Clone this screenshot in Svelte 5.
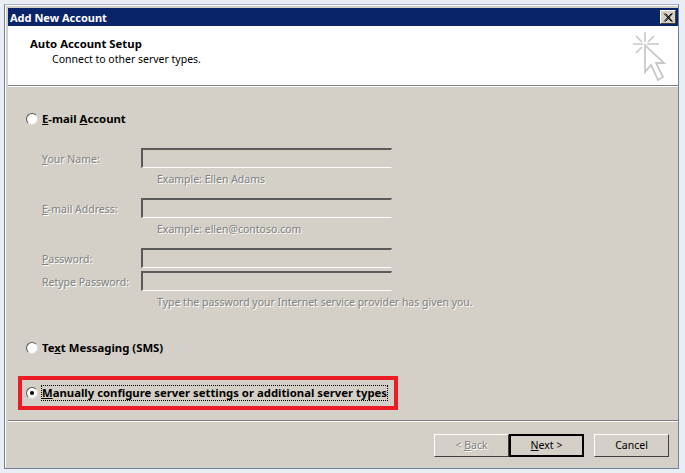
<script>
  // form rows on the disabled e-mail option
  const fields = [
    { key: "Y", rest: "our Name:", hint: "Example: Ellen Adams" },
    { key: "E", rest: "-mail Address:", hint: "Example: ellen@contoso.com" },
    { key: "P", rest: "assword:", hint: "" },
    { key: "", rest: "Retype Password:", hint: "Type the password your Internet service provider has given you." }
  ];
</script>

<div class="desktop">
  <div class="window">
    <div class="titlebar">
      <span class="title">Add New Account</span>
      <button class="close" aria-label="Close">
        <svg width="10" height="9" viewBox="0 0 10 9"><path d="M1 0.5 L8.5 8.5 M2.5 0.5 L9.5 8.5 M8.5 0.5 L1 8.5 M9.5 0.5 L2.5 8.5" stroke="#000" stroke-width="1" fill="none"/></svg>
      </button>
    </div>

    <div class="header">
      <div>
        <div class="h-title">Auto Account Setup</div>
        <div class="h-sub">Connect to other server types.</div>
      </div>
      <svg class="wizard" width="36" height="50" viewBox="0 0 36 50" fill="none">
        <path d="M13 0 V10 M1 12 H11 M15 12 H27 M4 4 L10 10 M22 4 L16 10 M4 21 L10 15" stroke="#c8c8c8" stroke-width="1.6"/>
        <path d="M13 13 L13 40 L19 33 L26 48 L31 45 L24 31 L32 31 Z" fill="#fff" stroke="#c8c8c8" stroke-width="1.8"/>
      </svg>
    </div>

    <div class="body">
      <label class="option first"><span class="radio"></span><span><u>E</u>-mail <u>A</u>ccount</span></label>

      <div class="form">
        {#each fields as f, i}
          <div class="row" class:tight={i === 3}>
            <span class="lbl"><u>{f.key}</u>{f.rest}</span>
            <span class="input"></span>
          </div>
          {#if f.hint}<div class="hint" class:last={i === 3}>{f.hint}</div>{/if}
        {/each}
      </div>

      <label class="option sms"><span class="radio"></span><span>Te<u>x</u>t Messaging (SMS)</span></label>

      <div class="highlight">
        <label class="option manual"><span class="radio checked"></span><span class="focus"><u>M</u>anually configure server settings or additional server types</span></label>
      </div>
    </div>

    <div class="footer">
      <button class="btn disabled">&lt; <u>B</u>ack</button>
      <button class="btn default"><u>N</u>ext &gt;</button>
      <button class="btn cancel">Cancel</button>
    </div>
  </div>
</div>

<style>
  :global(body) {
    margin: 0;
    background: #e9edf4;
  }

  .desktop {
    width: 685px;
    height: 473px;
    box-sizing: border-box;
    padding: 4px 6px 4px 4px;
    font-family: "Noto Sans", "DejaVu Sans", sans-serif;
    font-size: 10.5px;
    color: #000;
    overflow: hidden;
  }

  .window {
    height: 100%;
    box-sizing: border-box;
    display: flex;
    flex-direction: column;
    background: #d4d0c8;
    border: 1px solid #6f7f9c;
    border-top-color: #a8b4c8;
    padding: 3px 0 0 3px;
    box-shadow: inset 1px 1px 0 #fff;
  }

  .titlebar {
    height: 18px;
    flex: none;
    display: flex;
    align-items: center;
    justify-content: space-between;
    background: #0a246a;
    padding: 0 2px;
  }

  .title {
    color: #fff;
    font-size: 11px;
    font-weight: 700;
  }

  .close {
    width: 16px;
    height: 14px;
    padding: 0;
    display: flex;
    align-items: center;
    justify-content: center;
    background: #d4d0c8;
    border: 1px solid;
    border-color: #fff #404040 #404040 #fff;
  }

  .header {
    flex: none;
    height: 60px;
    box-sizing: border-box;
    background: #fff;
    border-bottom: 1px solid #808080;
    display: flex;
    justify-content: space-between;
    padding: 11px 10px 0 22px;
  }

  .h-title {
    font-size: 11.33px;
    font-weight: 700;
    line-height: 14px;
  }

  .h-sub {
    margin: 1px 0 0 22px;
    line-height: 14px;
  }

  .wizard {
    margin-top: -5px;
  }

  .body {
    flex: 1;
    display: flex;
    flex-direction: column;
    padding-left: 10px;
    border-top: 1px solid #fff;
  }

  .option {
    display: flex;
    align-items: center;
    gap: 4px;
    font-size: 11.33px;
    font-weight: 700;
    line-height: 14px;
  }

  .radio {
    width: 12px;
    height: 12px;
    flex: none;
    box-sizing: border-box;
    border-radius: 50%;
    background: #fff;
    border: 1px solid;
    border-color: #555 #ddd #ddd #555;
    position: relative;
  }

  .radio.checked::after {
    content: "";
    position: absolute;
    left: 3px;
    top: 3px;
    width: 4px;
    height: 4px;
    border-radius: 50%;
    background: #000;
  }

  .first {
    margin: 25px 0 0 8px;
  }

  .form {
    margin: 22px 0 0 24px;
    color: #808080;
    text-shadow: 1px 1px 0 #fff;
  }

  .row {
    display: flex;
    align-items: center;
    height: 20px;
  }

  .row.tight {
    margin-top: 3px;
  }

  .lbl {
    width: 99px;
    padding-top: 2px;
  }

  .input {
    width: 251px;
    height: 20px;
    box-sizing: border-box;
    border-style: solid;
    border-width: 2px 1px 1px 2px;
    border-color: #5a5a5a #d4d0c8 #fff #5a5a5a;
  }

  .hint {
    margin: 4px 0 0 115px;
    line-height: 14px;
  }

  .hint + .row {
    margin-top: 12px;
  }

  .hint.last {
    margin-top: 4px;
  }

  .sms {
    margin: 32px 0 0 8px;
  }

  .highlight {
    margin-top: 21px;
    width: 380px;
    height: 34px;
    box-sizing: border-box;
    border: 4px solid #ed1c24;
    display: flex;
    align-items: center;
    padding-left: 4px;
  }

  .focus {
    outline: 1px dotted #000;
    white-space: nowrap;
  }

  .footer {
    flex: none;
    height: 48px;
    box-sizing: border-box;
    border-top: 1px solid #808080;
    box-shadow: inset 0 1px 0 #fff;
    display: flex;
    justify-content: flex-end;
    align-items: flex-start;
    padding: 13px 9px 0 0;
  }

  .btn {
    width: 75px;
    height: 23px;
    padding: 0 0 2px;
    font: inherit;
    color: #000;
    background: #d4d0c8;
    border: 1px solid;
    border-color: #fff #404040 #404040 #fff;
  }

  .btn.disabled {
    color: #808080;
    text-shadow: 1px 1px 0 #fff;
  }

  .btn.default {
    border: 2px solid #000;
  }

  .btn.cancel {
    margin-left: 10px;
  }
</style>
